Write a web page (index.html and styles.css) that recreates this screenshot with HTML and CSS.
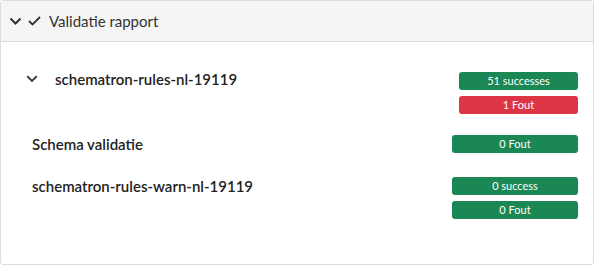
FILE: index.html
```html
<!DOCTYPE html>
<html>
<head>
<meta charset="utf-8">
<link rel="stylesheet" href="styles.css">
</head>
<body>
<div class="card">
  <div class="card-header">
    <svg class="icon" width="13" height="9" viewBox="0 0 13 9"><path d="M1.5 1.5 L6.5 6.5 L11.5 1.5" fill="none" stroke="#333" stroke-width="2"/></svg>
    <svg class="icon" width="13" height="10" viewBox="0 0 13 10"><path d="M1 5 L4.5 8.5 L12 1" fill="none" stroke="#333" stroke-width="1.8"/></svg>
    <span class="title">Validatie rapport</span>
  </div>
  <div class="card-body">
    <div class="row row-first">
      <div class="name">
        <svg class="chev" width="12" height="8" viewBox="0 0 12 8"><path d="M1.2 1.2 L6 6 L10.8 1.2" fill="none" stroke="#333" stroke-width="1.8"/></svg>
        <span>schematron-rules-nl-19119</span>
      </div>
      <div class="badges narrow">
        <span class="badge green">51 successes</span>
        <span class="badge red">1 Fout</span>
      </div>
    </div>
    <div class="row row-plain">
      <div class="name">Schema validatie</div>
      <div class="badges">
        <span class="badge green">0 Fout</span>
      </div>
    </div>
    <div class="row row-plain">
      <div class="name">schematron-rules-warn-nl-19119</div>
      <div class="badges">
        <span class="badge green">0 success</span>
        <span class="badge green">0 Fout</span>
      </div>
    </div>
  </div>
</div>
</body>
</html>
```
FILE: styles.css
```css
html, body { margin: 0; padding: 0; background: #fff; }
body { font-family: Lato, "Open Sans", sans-serif; color: #222; }
.card {
  width: 592px;
  height: 263px;
  border: 1px solid #dcdcdc;
  border-radius: 3px;
  box-sizing: content-box;
}
.card-header {
  height: 40px;
  background: #f5f5f5;
  border-bottom: 1px solid #dcdcdc;
  display: flex;
  align-items: center;
  padding-left: 8px;
  gap: 6px;
  color: #333;
}
.title { font-size: 15px; margin-left: 2px; }
.card-body { padding: 30px 15px 0 31px; }
.row { display: flex; justify-content: space-between; align-items: flex-start; }
.name { font-size: 15px; font-weight: 600; color: #222; display: flex; align-items: center; line-height: 18px; }
.chev { margin-left: -6px; margin-right: 17px; }
.row-first .name { margin-top: -2px; }
.badges { display: flex; flex-direction: column; gap: 6px; width: 126px; }
.badges.narrow { width: 119px; }
.badge {
  display: block;
  height: 18px;
  line-height: 18px;
  font-size: 11px;
  color: #fff;
  text-align: center;
  border-radius: 3px;
}
.green { background: #1a8754; }
.red { background: #dc3545; }
.row-plain { margin-top: 21px; }
.row-plain + .row-plain { margin-top: 24px; }
```
